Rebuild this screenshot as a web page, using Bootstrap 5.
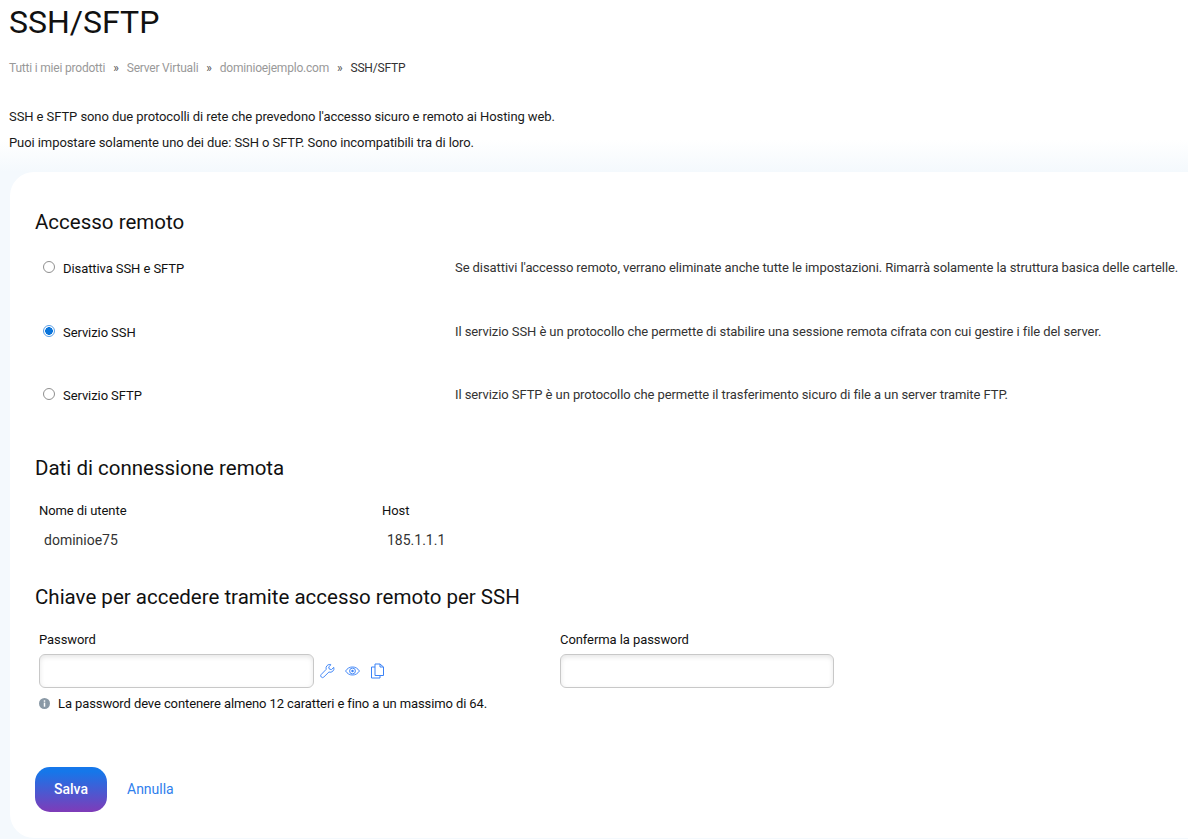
<!DOCTYPE html>
<html lang="it">
<head>
    <meta charset="UTF-8">
    <meta name="viewport" content="width=device-width, initial-scale=1.0">
    <title>SSH/SFTP</title>
    <link rel="stylesheet" href="https://cdn.jsdelivr.net/npm/bootstrap@5.3.0/dist/css/bootstrap.min.css">
    <style>
        html, body { height: 100%; }
        body {
            font-family: Roboto, "Liberation Sans", sans-serif;
            font-size: 13px;
            letter-spacing: -.08px;
            color: #1a1a1a;
            background: linear-gradient(#fff 140px, #f4f9fd 172px);
            overflow: hidden;
        }
        .page-wrap { padding: 0 0 0 9px; }
        .page-title { font-size: 32px; font-weight: 400; color: #111; line-height: 38px; margin: 3px 0 0; padding: 0; letter-spacing: 0; }
        .crumbs { font-size: 12px; letter-spacing: -.2px; color: #999; margin: 18px 0 0; line-height: 18px; gap: 8px; }
        .crumbs .sep { color: #555; }
        .crumbs .here { color: #333; }
        .intro { line-height: 18px; margin: 0; }
        .intro-first { margin-top: 31px; }
        .intro-second { margin-top: 8px; }
        .panel {
            background: #fff;
            border-radius: 24px 0 0 24px;
            margin: 20px 0 0 1px;
            height: 666px;
            padding: 37px 0 0 25px;
        }
        .sect-title { font-size: 20.5px; font-weight: 400; color: #111; line-height: 26px; margin: 0; letter-spacing: 0; }
        .opt-list { margin-top: 24px; }
        .opt-row { height: 63.5px; align-items: flex-start; }
        .opt-left { width: 420px; padding-left: 8px; flex: none; }
        .opt-left .form-check-input { width: 12px; height: 12px; margin: 2px 8px 0 0; flex: none; border-color: #8f8f8f; }
        .opt-left .form-check-input:checked { background-image: radial-gradient(circle, #0a74da 3.6px, #fff 4px); background-color: #fff; border-color: #5a9fe6; }
        .opt-left label { line-height: 18px; margin-top: 1px; color: #111; }
        .opt-text { line-height: 18px; color: #333; white-space: nowrap; }
        .sect-data { margin-top: 5px; }
        .data-row { margin-top: 21px; }
        .sect-key { margin-top: 35px; }
        .fld-label { color: #111; line-height: 18px; }
        .fld-value { color: #333; font-size: 14px; letter-spacing: 0; line-height: 18px; margin-top: 11px; padding-left: 5px; }
        .key-row { margin-top: 21px; }
        .key-row .fld-label { margin-bottom: 5px; }
        .pw-input {
            width: 275px; height: 34px; border: 1px solid #c8c8c8; border-radius: 6px;
            box-shadow: inset 0 2px 5px rgba(0,0,0,.1); padding: 0 8px; font-size: 13px;
        }
        .pw-input-alt { width: 274px; }
        .pw-tools { gap: 6px; }
        .pw-icon { width: 15px; height: 16px; color: #3b82f6; flex: none; }
        .pw-icon + .pw-icon { margin-left: 4px; }
        .hint { color: #111; line-height: 18px; margin-top: 7px; letter-spacing: -.1px; }
        .form-actions { margin-top: 54px; gap: 20px; }
        .btn-save {
            width: 72px; height: 45px; border: 0; border-radius: 15px; color: #fff; font-size: 14px; font-weight: 500; padding: 0;
            background: linear-gradient(#1577ea 10%, #7f3bb8 100%);
        }
        .btn-save:hover { color: #fff; }
        .cancel-link { color: #2f80ed; font-size: 14px; line-height: 20px; margin-bottom: 1px; text-decoration: none; letter-spacing: 0; }
        .host-col { width: 343px; }
        .pass-col { width: 521px; }
    </style>
</head>
<body>

<div class="page-wrap">
    <h1 class="page-title">SSH/SFTP</h1>
    <div class="crumbs d-flex">
        <span>Tutti i miei prodotti</span><span class="sep">»</span>
        <span>Server Virtuali</span><span class="sep">»</span>
        <span>dominioejemplo.com</span><span class="sep">»</span>
        <span class="here">SSH/SFTP</span>
    </div>
    <p class="intro intro-first">SSH e SFTP sono due protocolli di rete che prevedono l'accesso sicuro e remoto ai Hosting web.</p>
    <p class="intro intro-second">Puoi impostare solamente uno dei due: SSH o SFTP. Sono incompatibili tra di loro.</p>

    <div class="panel">
        <h2 class="sect-title">Accesso remoto</h2>
        <div class="opt-list">
            <div class="opt-row d-flex">
                <div class="opt-left d-flex">
                    <input class="form-check-input" type="radio" name="mode" id="modeOff">
                    <label for="modeOff">Disattiva SSH e SFTP</label>
                </div>
                <div class="opt-text">Se disattivi l'accesso remoto, verrano eliminate anche tutte le impostazioni. Rimarrà solamente la struttura basica delle cartelle.</div>
            </div>
            <div class="opt-row d-flex">
                <div class="opt-left d-flex">
                    <input class="form-check-input" type="radio" name="mode" id="modeSsh" checked>
                    <label for="modeSsh">Servizio SSH</label>
                </div>
                <div class="opt-text">Il servizio SSH è un protocollo che permette di stabilire una sessione remota cifrata con cui gestire i file del server.</div>
            </div>
            <div class="opt-row d-flex">
                <div class="opt-left d-flex">
                    <input class="form-check-input" type="radio" name="mode" id="modeSftp">
                    <label for="modeSftp">Servizio SFTP</label>
                </div>
                <div class="opt-text">Il servizio SFTP è un protocollo che permette il trasferimento sicuro di file a un server tramite FTP.</div>
            </div>
        </div>

        <h2 class="sect-title sect-data">Dati di connessione remota</h2>
        <div class="d-flex data-row ps-1">
            <div class="host-col">
                <div class="fld-label">Nome di utente</div>
                <div class="fld-value">dominioe75</div>
            </div>
            <div>
                <div class="fld-label">Host</div>
                <div class="fld-value">185.1.1.1</div>
            </div>
        </div>

        <h2 class="sect-title sect-key">Chiave per accedere tramite accesso remoto per SSH</h2>
        <div class="d-flex key-row ps-1">
            <div class="pass-col">
                <div class="fld-label">Password</div>
                <div class="d-flex align-items-center pw-tools">
                    <input type="password" class="pw-input">
                    <svg class="pw-icon" viewBox="0 0 16 16" fill="none" stroke="currentColor" stroke-width="1" stroke-linejoin="round"><path d="M10.500 1a4 4 0 0 0-3.900 5.200L1.300 11.700a1.900 1.900 0 0 0 2.800 2.700l5.400-5.300a4 4 0 0 0 5.200-5l-2.500 2.400-2.300-.6-.6-2.300L11.800 1.200a4 4 0 0 0-1.300-.2z"/></svg>
                    <svg class="pw-icon" viewBox="0 0 16 16" fill="none" stroke="currentColor" stroke-width="1"><path d="M.6 8C2.500 5.100 5 3.700 8 3.700s5.500 1.400 7.400 4.300c-1.900 2.900-4.400 4.300-7.400 4.300S2.500 10.900.6 8z"/><circle cx="8" cy="8" r="3.100"/><circle cx="8" cy="8" r="1.300" fill="currentColor" stroke="none"/></svg>
                    <svg class="pw-icon" viewBox="0.500 0 15 16" fill="none" stroke="currentColor" stroke-width="1" stroke-linejoin="round"><path d="M5.500 1h5l3.500 3v8.500H5.500z"/><path d="M10.500 1v3h3.500"/><path d="M5.500 4H2v11h8.500v-2.500"/></svg>
                </div>
            </div>
            <div>
                <div class="fld-label">Conferma la password</div>
                <input type="password" class="pw-input pw-input-alt">
            </div>
        </div>
        <div class="hint d-flex align-items-center gap-2 ps-1">
            <svg width="11" height="11" viewBox="0 0 12 12"><circle cx="6" cy="6" r="6" fill="#8a99a6"/><rect x="5.200" y="5" width="1.600" height="4.500" fill="#fff"/><rect x="5.200" y="2.500" width="1.600" height="1.600" fill="#fff"/></svg>
            <span>La password deve contenere almeno 12 caratteri e fino a un massimo di 64.</span>
        </div>

        <div class="d-flex align-items-center form-actions">
            <button type="button" class="btn btn-save">Salva</button>
            <a href="#" class="cancel-link">Annulla</a>
        </div>
    </div>
</div>

</body>
</html>
